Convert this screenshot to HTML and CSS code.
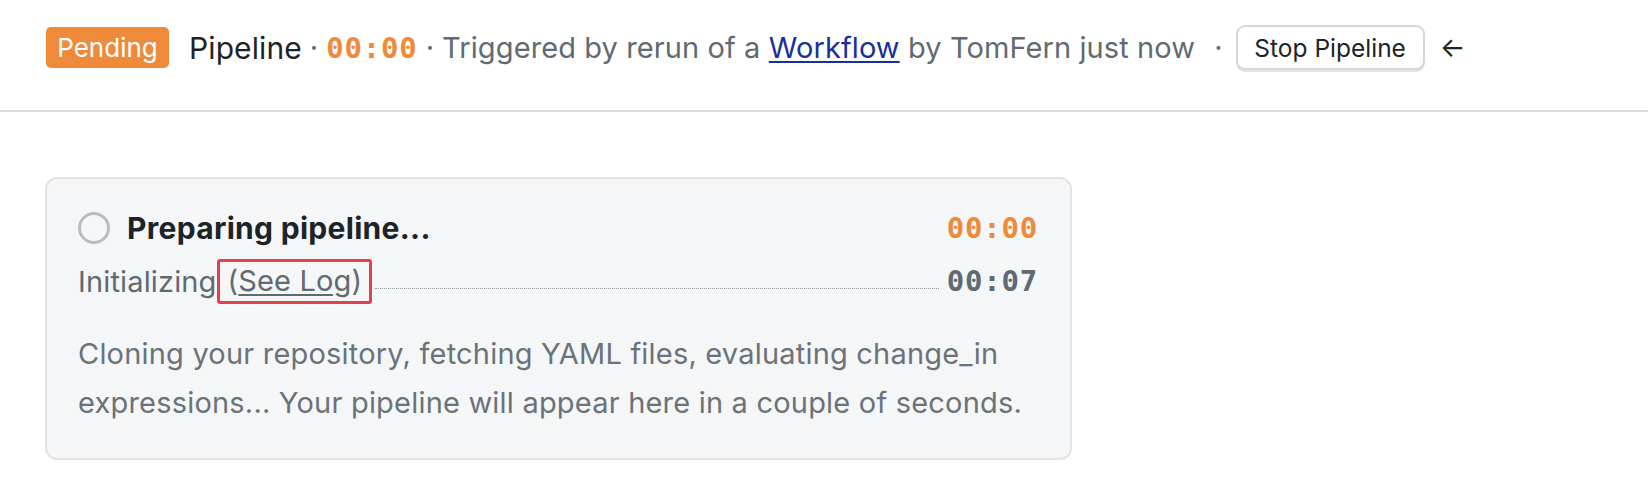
FILE: index.html
```html
<!DOCTYPE html>
<html lang="en">
<head>
<meta charset="utf-8">
<title>Pipeline</title>
<link rel="stylesheet" href="styles.css">
</head>
<body>
<header class="topbar">
  <span class="badge">Pending</span>
  <span class="title">Pipeline</span>
  <span class="sep">·</span>
  <span class="timer">00:00</span>
  <span class="sep">·</span>
  <span class="meta">Triggered by rerun of a <a class="wf-link" href="#">Workflow</a> by TomFern just now</span>
  <span class="sep sep-wide">·</span>
  <button class="btn" type="button">Stop Pipeline</button>
  <span class="back">←</span>
</header>
<main class="content">
  <section class="card">
    <div class="card-head">
      <span class="status-ring"></span>
      <h2 class="card-title">Preparing pipeline...</h2>
      <span class="card-timer">00:00</span>
    </div>
    <div class="step-row">
      <span class="step-name">Initializing</span>
      <span class="highlight"><a class="log-link" href="#">(<u>See Log</u>)</a></span>
      <span class="leader"></span>
      <span class="step-time">00:07</span>
    </div>
    <p class="desc">Cloning your repository, fetching YAML files, evaluating change_in expressions... Your pipeline will appear here in a couple of seconds.</p>
  </section>
</main>
</body>
</html>
```
FILE: styles.css
```css
* { box-sizing: border-box; }
html, body { margin: 0; padding: 0; background: #ffffff; }
body {
  font-family: Inter, "Noto Sans", sans-serif;
  color: #5f6a71;
  font-size: 29px;
}
.topbar {
  display: flex;
  align-items: center;
  height: 112px;
  padding: 0 0 15px 46px;
  border-bottom: 2px solid #dcdcdc;
  font-size: 29px;
  letter-spacing: 0.1px;
}
.badge {
  display: inline-flex;
  align-items: center;
  justify-content: center;
  height: 41px;
  width: 123px;
  background: #ee8a3a;
  color: #fff;
  border-radius: 5px;
  font-size: 26px;
  letter-spacing: 0;
  margin-right: 20px;
}
.title { color: #1d2327; font-size: 30px; }
.sep { margin: 0 8px; color: #5f6a71; }
.sep-wide { margin: 0 13px 0 19px; }
.timer, .card-timer, .step-time {
  font-family: "DejaVu Sans Mono", monospace;
  font-weight: bold;
  font-size: 29px;
  letter-spacing: 0.8px;
}
.timer { color: #ee8a3a; }
.meta { color: #5f6a71; }
.wf-link { color: #16319a; text-decoration: underline; text-underline-offset: 3px; }
.btn {
  font-family: inherit;
  font-size: 24.5px;
  color: #1d2327;
  background: #fff;
  height: 45px;
  width: 189px;
  border: 2px solid #d4d6d8;
  border-radius: 9px;
  box-shadow: 0 2px 0 #e3e4e6;
  padding: 0;
}
.back { margin-left: 15px; color: #1d2327; font-size: 27px; }
.content { padding: 65px 0 0 45px; }
.card {
  width: 1027px;
  background: #f5f6f8;
  border: 2px solid #e1e3e5;
  border-radius: 12px;
  padding: 32px 32px 31px 31px;
}
.card-head { display: flex; align-items: center; height: 34px; }
.status-ring {
  width: 32px; height: 32px;
  border: 3px solid #b9bdbf;
  border-radius: 50%;
  margin-right: 17px;
}
.card-title {
  margin: 0;
  font-size: 30px;
  font-weight: 700;
  letter-spacing: 0.3px;
  color: #1d2327;
  flex: 1;
}
.card-timer { color: #ee8a3a; }
.step-row {
  display: flex;
  align-items: center;
  margin-top: 12px;
  height: 48px;
  letter-spacing: 0.15px;
}
.highlight {
  border: 3px solid #e2434b;
  border-radius: 3px;
  padding: 1px 7px 3px 8px;
}
.log-link { color: #5f6a71; text-decoration: none; }
.log-link u { text-underline-offset: 3px; }
.leader {
  flex: 1;
  align-self: flex-end;
  border-bottom: 1px dotted #8d9499;
  margin: 0 8px 16px 3px;
}
.step-time { color: #5f6a71; }
.desc {
  margin: 24px 0 0 0;
  line-height: 49px;
  letter-spacing: 0.2px;
  color: #6a7378;
}
```
